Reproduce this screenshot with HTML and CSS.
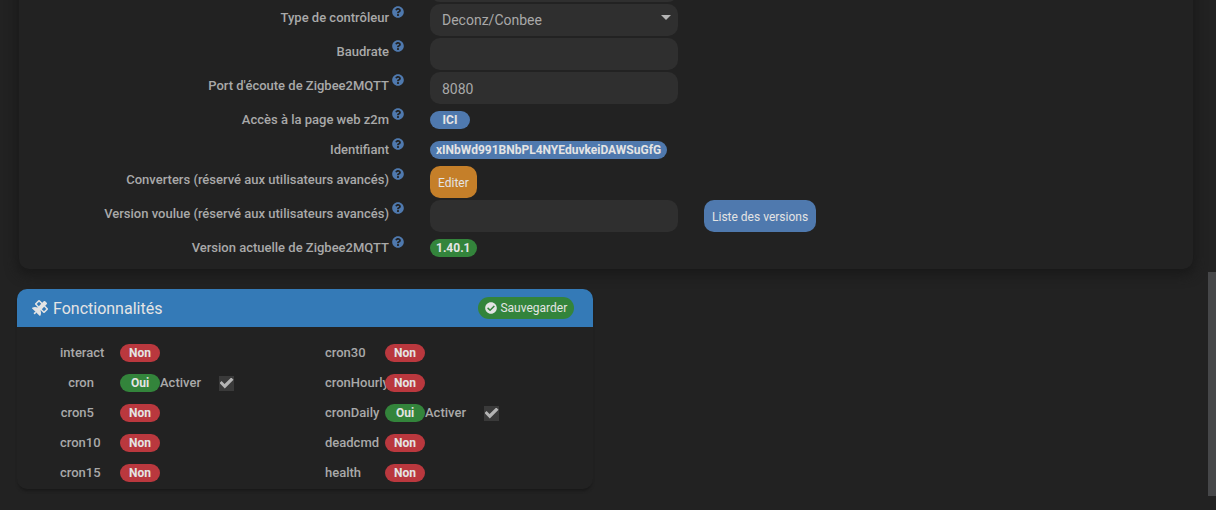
FILE: index.html
```html
<!DOCTYPE html>
<html lang="fr">
<head>
<meta charset="utf-8">
<title>Configuration</title>
<link rel="stylesheet" href="styles.css">
</head>
<body>
<svg class="sprite" aria-hidden="true">
  <symbol id="help" viewBox="0 0 512 512"><path d="M504 256c0 137-111 248-248 248S8 393 8 256C8 119 119 8 256 8s248 111 248 248zM262.700 90c-54.500 0-89.300 23-116.500 63.800-3.500 5.300-2.400 12.400 2.700 16.300l34.700 26.300c5.200 3.900 12.600 3 16.700-2.100 17.900-22.700 30.100-35.800 57.300-35.800 20.400 0 45.700 13.100 45.700 33 0 15-12.400 22.700-32.500 34C247.100 238.500 216 255 216 296v4c0 6.600 5.400 12 12 12h56c6.600 0 12-5.400 12-12v-1.300c0-28.500 83.200-29.600 83.200-106.700C379.200 133.900 319 90 262.700 90zM256 338c-25.400 0-46 20.600-46 46s20.600 46 46 46 46-20.600 46-46-20.600-46-46-46z"/></symbol>
</svg>
<main class="page">
  <form class="panel settings">
    <div class="row">
      <span></span>
      <div class="field"><input class="control" type="text" aria-label="Port du contrôleur"></div>
    </div>
    <div class="row">
      <div class="caption"><label for="type">Type de contrôleur</label><svg class="help"><use href="#help"/></svg></div>
      <div class="field select-wrap"><select class="control" id="type"><option>Deconz/Conbee</option></select></div>
    </div>
    <div class="row">
      <div class="caption"><label for="baud">Baudrate</label><svg class="help"><use href="#help"/></svg></div>
      <div class="field"><input class="control" id="baud" type="text"></div>
    </div>
    <div class="row">
      <div class="caption"><label for="port">Port d'écoute de Zigbee2MQTT</label><svg class="help"><use href="#help"/></svg></div>
      <div class="field"><input class="control" id="port" type="text" value="8080"></div>
    </div>
    <div class="row">
      <div class="caption"><span>Accès à la page web z2m</span><svg class="help"><use href="#help"/></svg></div>
      <div class="field"><a class="pill info wide" href="#">ICI</a></div>
    </div>
    <div class="row">
      <div class="caption"><span>Identifiant</span><svg class="help"><use href="#help"/></svg></div>
      <div class="field"><span class="pill info">xINbWd991BNbPL4NYEduvkeiDAWSuGfG</span></div>
    </div>
    <div class="row">
      <div class="caption"><span>Converters (réservé aux utilisateurs avancés)</span><svg class="help"><use href="#help"/></svg></div>
      <div class="field"><button class="btn warning" type="button">Editer</button></div>
    </div>
    <div class="row">
      <div class="caption"><label for="wanted">Version voulue (réservé aux utilisateurs avancés)</label><svg class="help"><use href="#help"/></svg></div>
      <div class="field"><input class="control" id="wanted" type="text"></div>
      <div class="field"><button class="btn info" type="button">Liste des versions</button></div>
    </div>
    <div class="row">
      <div class="caption"><span>Version actuelle de Zigbee2MQTT</span><svg class="help"><use href="#help"/></svg></div>
      <div class="field"><span class="pill success">1.40.1</span></div>
    </div>
  </form>

  <section class="panel features">
    <header class="heading">
      <h2 class="title">
        <svg class="title-icon" viewBox="0 0 512 512" aria-hidden="true"><path d="M502.600 310l-96.700 96.700a31.900 31.900 0 0 1-45 0L280.600 326.300l-9.900 9.900a190.600 190.600 0 0 1-5.400 168.500c-4.500 8.500-16.400 9.600-23.200 2.800L134.500 400l-17.800 17.800c.7 2.600 1.600 5 1.600 7.800a32 32 0 1 1-32-32c2.800 0 5.200.9 7.800 1.600l17.800-17.800L4.400 269.900c-6.800-6.800-5.700-18.600 2.800-23.200a190.600 190.600 0 0 1 168.500-5.400l9.800-9.800-80.300-80.400a32 32 0 0 1 0-45.100L202 9.300a31.600 31.600 0 0 1 22.500-9.300 32 32 0 0 1 22.600 9.300l80.300 80.300 47.800-47.900a33.600 33.600 0 0 1 47.500 0l47.500 47.500a33.600 33.600 0 0 1 0 47.500l-47.800 47.900 80.300 80.400a31.800 31.800 0 0 1-.1 45zM219.600 197.400l73.800-73.800-68.900-68.900-73.800 73.800zm237.700 90.100l-68.900-68.900-73.800 73.800 68.900 68.900z"/></svg>
        <span class="title-text">Fonctionnalités</span>
      </h2>
      <button class="save" type="button">
        <svg class="save-icon" viewBox="0 0 512 512" aria-hidden="true"><path d="M504 256c0 137-111 248-248 248S8 393 8 256 119 8 256 8s248 111 248 248zM227.300 387.300l184-184c6.200-6.200 6.200-16.400 0-22.600l-22.600-22.600c-6.200-6.200-16.400-6.200-22.600 0L216 308.100l-70.100-70.100c-6.200-6.200-16.400-6.200-22.600 0l-22.600 22.600c-6.200 6.200-6.200 16.400 0 22.600l104 104c6.200 6.300 16.400 6.300 22.600.1z"/></svg>
        Sauvegarder
      </button>
    </header>
    <div class="columns">
      <div>
        <div class="feature"><span class="name">interact</span><span class="pill danger wide">Non</span></div>
        <div class="feature"><span class="name">cron</span><span class="pill success wide">Oui</span><label class="enable" for="cron">Activer</label><input class="check" id="cron" type="checkbox" checked></div>
        <div class="feature"><span class="name">cron5</span><span class="pill danger wide">Non</span></div>
        <div class="feature"><span class="name">cron10</span><span class="pill danger wide">Non</span></div>
        <div class="feature"><span class="name">cron15</span><span class="pill danger wide">Non</span></div>
      </div>
      <div>
        <div class="feature"><span class="name">cron30</span><span class="pill danger wide">Non</span></div>
        <div class="feature"><span class="name">cronHourly</span><span class="pill danger wide">Non</span></div>
        <div class="feature"><span class="name">cronDaily</span><span class="pill success wide">Oui</span><label class="enable" for="daily">Activer</label><input class="check" id="daily" type="checkbox" checked></div>
        <div class="feature"><span class="name">deadcmd</span><span class="pill danger wide">Non</span></div>
        <div class="feature"><span class="name">health</span><span class="pill danger wide">Non</span></div>
      </div>
    </div>
  </section>
</main>
<div class="scroll-thumb"></div>
</body>
</html>
```
FILE: styles.css
```css
* { box-sizing: border-box; }

body {
  margin: 0;
  overflow: hidden;
  background: #222;
  color: #a9a9a9;
  font: 500 13px/18px Roboto, sans-serif;
}

.sprite { display: none; }

/* The view is scrolled part of the way down the form. */
.page {
  margin-top: -30px;
  padding: 0 23px 20px 17px;
}

.panel {
  border-radius: 10px;
  background: #222;
}

.settings {
  margin-left: 2px;
  padding-bottom: 5px;
  box-shadow: 0 4px 12px 2px #191919;
}

.row {
  display: grid;
  grid-template-columns: 398fr 274fr 502fr;
  align-items: start;
  min-height: 30px;
  padding-bottom: 2px;
}

.caption {
  display: flex;
  justify-content: flex-end;
  gap: 3px;
  padding: 5px 13px 0;
  white-space: nowrap;
}

.help {
  width: 12px;
  height: 12px;
  margin-top: -3px;
  fill: #4f79ae;
}

.field {
  display: flex;
  padding: 0 13px;
}

.field .pill { margin-top: 5px; }

.control {
  width: 100%;
  height: 32px;
  padding: 2px 12px 0;
  border: 0;
  border-radius: 10px;
  background: #2f2f2f;
  color: #a9a9a9;
  font: 400 14px/20px Roboto, sans-serif;
  appearance: none;
}

select.control { padding-top: 0; }

.select-wrap { position: relative; }

.select-wrap::after {
  content: "";
  position: absolute;
  top: 11px;
  right: 20px;
  border: 5px solid transparent;
  border-top-color: #b4b4b4;
  border-bottom: 0;
  pointer-events: none;
}

.pill {
  display: inline-block;
  height: 18px;
  padding: 0 6px;
  border-radius: 9px;
  color: #e4e4e4;
  font-size: 12px;
  font-weight: 700;
  line-height: 18px;
  text-align: center;
  text-decoration: none;
}

.wide { width: 40px; }

.info { background: #4f79ae; }
.success { background: #33843b; }
.danger { background: #ba383e; }
.warning { background: #c57f29; }

.btn {
  height: 32px;
  padding: 2px 8px 0;
  border: 0;
  border-radius: 10px;
  color: #e4e4e4;
  font: 400 12px/18px Roboto, sans-serif;
}

.features {
  width: 49%;
  min-width: 576px;
  margin-top: 20px;
  box-shadow: 0 3px 3px -1px #191919;
}

.heading {
  display: flex;
  align-items: center;
  justify-content: space-between;
  height: 38px;
  padding: 0 19px 0 15px;
  border-radius: 10px 10px 0 0;
  background: #347ab7;
  color: #e4e4e4;
}

.title {
  display: flex;
  align-items: center;
  gap: 5px;
  margin: 0;
  font-size: 16px;
  font-weight: 400;
}

.title-text { padding-top: 2px; }

.title-icon {
  width: 16px;
  height: 16px;
  fill: currentColor;
}

.save {
  display: flex;
  align-items: center;
  gap: 3px;
  height: 22px;
  padding: 0 7px;
  border: 0;
  border-radius: 11px;
  background: #33843b;
  color: #e4e4e4;
  font: 400 12px/18px Roboto, sans-serif;
}

.save-icon {
  width: 12px;
  height: 12px;
  fill: currentColor;
}

.columns {
  display: grid;
  grid-template-columns: 265px 1fr;
  padding: 11px 0 1px 43px;
}

.feature {
  display: flex;
  align-items: center;
  height: 30px;
}

.name {
  width: 34px;
  margin-right: 26px;
  text-align: right;
  white-space: nowrap;
}

.feature .pill { z-index: 1; }

.enable {
  width: 59px;
}

.check {
  appearance: none;
  display: grid;
  place-items: center;
  width: 15px;
  height: 15px;
  margin: 0;
  background: #3a3a3a;
}

.check:checked::after {
  content: "";
  width: 14px;
  height: 11px;
  background: #b4b4b4;
  clip-path: polygon(0 50%, 15% 31%, 36% 58%, 84% 0, 100% 20%, 38% 100%);
}

/* Thumb of the page's own scroll bar, over the content. */
.scroll-thumb {
  position: fixed;
  top: 272px;
  right: 0;
  bottom: 14px;
  width: 8px;
  background: #464749;
}
```
